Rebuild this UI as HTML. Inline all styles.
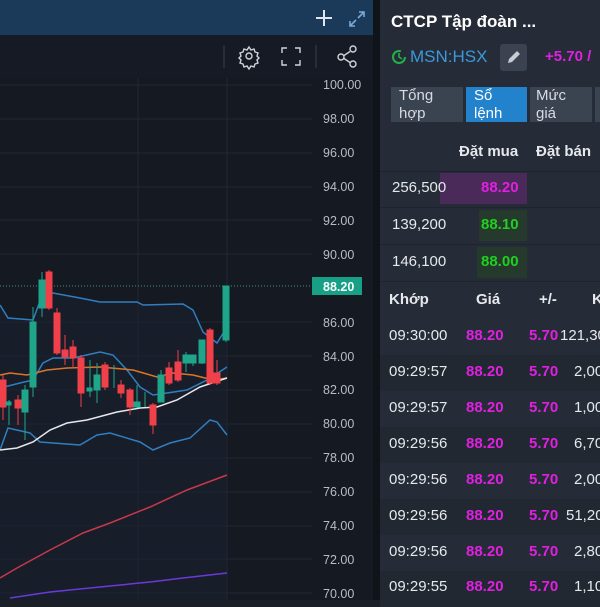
<!DOCTYPE html>
<html><head><meta charset="utf-8"><style>
*{margin:0;padding:0;box-sizing:border-box}
body{width:600px;height:600px;overflow:hidden;background:#1a1f28;font-family:"Liberation Sans","Noto Sans CJK SC",sans-serif;position:relative}
.a{position:absolute}
.r{position:absolute;left:380px;width:220px;background:#252c37}
.t{position:absolute;font-size:15px;color:#e6e8ec;white-space:nowrap}
.m{color:#e020e0;font-weight:bold}
</style></head><body>
<div class="a" style="left:0;top:0;width:373px;height:35px;background:#1b3a5a"></div>
<div class="a" style="left:0;top:35px;width:373px;height:43px;background:#151a24"></div>
<div class="a" style="left:0;top:78px;width:373px;height:522px;background:#151922"></div>
<div class="a" style="left:373px;top:0;width:7px;height:600px;background:#0f131a"></div>
<svg class="a" style="left:0;top:0" width="373" height="600">
<g stroke="#dfe6ee" stroke-width="2" fill="none"><path d="M316 18h16M324 10v16"/></g>
<g stroke="#7aa9d6" stroke-width="1.6" fill="none"><path d="M350 26l6-6M350 21v5h5M358 18l6-6M359 12h5v5"/></g>
<line x1="224" y1="45" x2="224" y2="68" stroke="#3a404c"/><line x1="316" y1="45" x2="316" y2="68" stroke="#3a404c"/>
<g stroke="#d0d4da" stroke-width="1.4" fill="none">
<circle cx="249" cy="56" r="3"/><path d="M249 47l2 3 3-1 1 3 3 1-1 3 2 2-2 2 1 3-3 1-1 3-3-1-2 3-2-3-3 1-1-3-3-1 1-3-2-2 2-2-1-3 3-1 1-3 3 1z"/>
<path d="M282 53v-5h5M295 48h5v5M300 60v5h-5M287 65h-5v-5"/>
<circle cx="353" cy="49" r="3"/><circle cx="341" cy="57" r="3"/><circle cx="353" cy="64" r="3"/><path d="M344 55.5l6-4M344 58.5l6 4"/>
</g>
<g stroke="#232834" stroke-width="1">
<path d="M0 85h312M0 119h312M0 153h312M0 187h312M0 220h312M0 254h312M0 322h312M0 356h312M0 390h312M0 424h312M0 458h312M0 492h312M0 526h312M0 559h312M0 593h312"/>
<path d="M138 78v522M227 78v522"/></g>
<line x1="0" y1="286" x2="312" y2="286" stroke="#4a8a80" stroke-dasharray="1 2"/>
<path d="M0 305L8 318 33 320 43 293 53 293 80 298 100 302 137 302 143 305 183 304 193 310 203 332 217 343 227 327L227 600 0 600Z" fill="#1a2030" opacity=".6"/>
<g fill="none" stroke-width="1.5">
<polyline stroke="#2f7fc0" points="0,305 8,318 33,320 43,293 53,293 80,298 100,302 137,302 143,305 183,304 193,310 203,332 217,343 227,327"/>
<polyline stroke="#2f7fc0" points="0,388 20,383 33,380 43,363 53,358 73,358 100,352 113,355 127,370 140,387 153,395 167,393 187,390 207,380 227,367"/>
<polyline stroke="#2f7fc0" points="0,450 8,428 30,433 40,442 53,443 80,445 97,435 110,433 140,442 153,450 170,443 190,438 210,420 217,422 227,435"/>
<polyline stroke="#d9762a" points="0,375 10,373 27,375 47,370 67,368 100,367 133,370 157,377 173,373 193,375 213,380 227,378"/>
<polyline stroke="#e8e8ea" points="0,450 17,448 33,442 50,430 67,423 87,420 117,412 140,408 157,407 177,400 200,387 227,378"/>
<polyline stroke="#c8384a" points="0,578 17,568 50,550 83,533 110,523 150,507 187,490 227,475"/>
<polyline stroke="#6a3ad8" points="10,598 50,592 100,587 150,582 183,578 227,573"/>
</g>
<g stroke-width="1">
<g stroke="#f0404a" fill="#f0404a">
<line x1="3" y1="375" x2="3" y2="420" /><rect x="0" y="380" width="6" height="27"/>
<line x1="18" y1="395" x2="18" y2="425"/><rect x="15" y="400" width="6" height="8"/>
<line x1="49" y1="270" x2="49" y2="310"/><rect x="46" y="272" width="6" height="36"/>
<line x1="57" y1="308" x2="57" y2="355"/><rect x="54" y="313" width="6" height="40"/>
<line x1="65" y1="335" x2="65" y2="365"/><rect x="62" y="350" width="6" height="7"/>
<line x1="73" y1="340" x2="73" y2="368"/><rect x="70" y="347" width="6" height="11"/>
<line x1="81" y1="355" x2="81" y2="407"/><rect x="78" y="358" width="6" height="35"/>
<line x1="105" y1="362" x2="105" y2="390"/><rect x="102" y="365" width="6" height="22"/>
<line x1="121" y1="380" x2="121" y2="398"/><rect x="118" y="385" width="6" height="8"/>
<line x1="130" y1="388" x2="130" y2="415"/><rect x="127" y="390" width="6" height="17"/>
<line x1="153" y1="403" x2="153" y2="434"/><rect x="150" y="405" width="6" height="20"/>
<line x1="169" y1="362" x2="169" y2="385"/><rect x="166" y="368" width="6" height="15"/>
<line x1="178" y1="350" x2="178" y2="382"/><rect x="175" y="362" width="6" height="18"/>
<line x1="210" y1="328" x2="210" y2="385"/><rect x="207" y="330" width="6" height="53"/>
<line x1="217" y1="360" x2="217" y2="385"/><rect x="214" y="373" width="6" height="10"/>
</g>
<g stroke="#1fa58a" fill="#1fa58a">
<line x1="9" y1="400" x2="9" y2="425"/><rect x="6" y="402" width="5" height="3"/>
<line x1="25" y1="385" x2="25" y2="440"/><rect x="22" y="390" width="6" height="22"/>
<line x1="33" y1="307" x2="33" y2="397"/><rect x="30" y="322" width="6" height="65"/>
<line x1="42" y1="272" x2="42" y2="317"/><rect x="39" y="280" width="6" height="28"/>
<line x1="90" y1="360" x2="90" y2="397"/><rect x="87" y="388" width="5" height="3"/>
<line x1="97" y1="363" x2="97" y2="403"/><rect x="94" y="375" width="6" height="15"/>
<line x1="114" y1="365" x2="114" y2="388"/>
<line x1="137" y1="385" x2="137" y2="408"/><rect x="134" y="402" width="6" height="5"/>
<line x1="145" y1="392" x2="145" y2="407"/>
<line x1="161" y1="370" x2="161" y2="402"/><rect x="158" y="375" width="6" height="27"/>
<line x1="186" y1="352" x2="186" y2="372"/><rect x="183" y="355" width="6" height="8"/>
<line x1="193" y1="355" x2="193" y2="366"/><rect x="190" y="355" width="6" height="8"/>
<line x1="202" y1="340" x2="202" y2="364"/><rect x="199" y="340" width="6" height="23"/>
<line x1="226" y1="286" x2="226" y2="342"/><rect x="223" y="286" width="6" height="54"/>
</g></g>
<g font-family="Liberation Sans,sans-serif" font-size="12.5" fill="#b8bcc4">
<text x="323" y="89">100.00</text><text x="323" y="123">98.00</text><text x="323" y="157">96.00</text><text x="323" y="191">94.00</text><text x="323" y="225">92.00</text><text x="323" y="259">90.00</text><text x="323" y="327">86.00</text><text x="323" y="361">84.00</text><text x="323" y="394">82.00</text><text x="323" y="428">80.00</text><text x="323" y="462">78.00</text><text x="323" y="496">76.00</text><text x="323" y="530">74.00</text><text x="323" y="564">72.00</text><text x="323" y="598">70.00</text>
</g>
<rect x="312" y="277" width="50" height="18" fill="#17a085"/>
<text x="323" y="291" font-family="Liberation Sans,sans-serif" font-size="12.5" font-weight="bold" fill="#fff">88.20</text>
</svg>

<div class="r" style="top:0;height:600px"></div>
<div class="t" style="left:391px;top:12px;font-size:17px;font-weight:bold;color:#fff">CTCP Tập đoàn ...</div>
<svg class="a" style="left:391px;top:49px" width="16" height="16"><circle cx="8" cy="8" r="6" fill="none" stroke="#22b04a" stroke-width="2" stroke-dasharray="30 8"/><path d="M8 4v4l3 2" stroke="#22b04a" stroke-width="1.6" fill="none"/></svg>
<div class="t" style="left:410px;top:47px;font-size:17px;color:#3a98dc">MSN:HSX</div>
<div class="a" style="left:500px;top:44px;width:27px;height:27px;background:#3b4350;border-radius:3px"></div>
<svg class="a" style="left:505px;top:49px" width="17" height="17"><path d="M3 14l1-4 8-8 3 3-8 8z" fill="#c8ccd2"/></svg>
<div class="t m" style="left:545px;top:48px;font-size:15px">+5.70 /</div>
<div class="a" style="left:391px;top:87px;width:72px;height:35px;background:#3a4350"></div>
<div class="a" style="left:466px;top:87px;width:61px;height:35px;background:#2283cc"></div>
<div class="a" style="left:530px;top:87px;width:62px;height:35px;background:#3a4350"></div>
<div class="a" style="left:595px;top:87px;width:10px;height:35px;background:#3a4350"></div>
<div class="t" style="left:399px;top:87px;line-height:18px;color:#d8dce2">Tổng<br>hợp</div>
<div class="t" style="left:474px;top:87px;line-height:18px;color:#fff">Sổ<br>lệnh</div>
<div class="t" style="left:536px;top:87px;line-height:18px;color:#d8dce2">Mức<br>giá</div>
<div class="t" style="left:459px;top:143px;font-weight:bold">Đặt mua</div>
<div class="t" style="left:536px;top:143px;font-weight:bold">Đặt bán</div>
<div class="a" style="left:380px;top:171px;width:220px;height:1px;background:#1e242d"></div>
<div class="a" style="left:380px;top:207px;width:220px;height:1px;background:#1e242d"></div>
<div class="a" style="left:380px;top:244px;width:220px;height:1px;background:#1e242d"></div>
<div class="a" style="left:380px;top:281px;width:220px;height:1px;background:#1e242d"></div>
<div class="a" style="left:440px;top:173px;width:87px;height:31px;background:#4a2a58"></div>
<div class="a" style="left:479px;top:210px;width:48px;height:31px;background:#253a2c"></div>
<div class="a" style="left:477px;top:247px;width:50px;height:31px;background:#253a2c"></div>
<div class="t" style="left:392px;top:179px">256,500</div><div class="t m" style="left:481px;top:179px">88.20</div>
<div class="t" style="left:392px;top:216px">139,200</div><div class="t" style="left:481px;top:216px;color:#1fd020;font-weight:bold">88.10</div>
<div class="t" style="left:392px;top:253px">146,100</div><div class="t" style="left:481px;top:253px;color:#1fd020;font-weight:bold">88.00</div>
<div class="t" style="left:389px;top:291px;font-weight:bold">Khớp</div>
<div class="t" style="left:476px;top:291px;font-weight:bold">Giá</div>
<div class="t" style="left:539px;top:291px;font-weight:bold">+/-</div>
<div class="t" style="left:592px;top:291px;font-weight:bold">K</div>
<div class="a" style="left:380px;top:355px;width:220px;height:36px;background:#212831"></div>
<div class="a" style="left:380px;top:427px;width:220px;height:36px;background:#212831"></div>
<div class="a" style="left:380px;top:499px;width:220px;height:36px;background:#212831"></div>
<div class="a" style="left:380px;top:571px;width:220px;height:36px;background:#212831"></div>
<div class="t" style="left:389px;top:327px">09:30:00</div><div class="t m" style="left:466px;top:327px">88.20</div><div class="t m" style="left:529px;top:327px">5.70</div><div class="t" style="left:560px;top:327px">121,30</div>
<div class="t" style="left:389px;top:363px">09:29:57</div><div class="t m" style="left:466px;top:363px">88.20</div><div class="t m" style="left:529px;top:363px">5.70</div><div class="t" style="left:574px;top:363px">2,00</div>
<div class="t" style="left:389px;top:399px">09:29:57</div><div class="t m" style="left:466px;top:399px">88.20</div><div class="t m" style="left:529px;top:399px">5.70</div><div class="t" style="left:574px;top:399px">1,00</div>
<div class="t" style="left:389px;top:435px">09:29:56</div><div class="t m" style="left:466px;top:435px">88.20</div><div class="t m" style="left:529px;top:435px">5.70</div><div class="t" style="left:574px;top:435px">6,70</div>
<div class="t" style="left:389px;top:471px">09:29:56</div><div class="t m" style="left:466px;top:471px">88.20</div><div class="t m" style="left:529px;top:471px">5.70</div><div class="t" style="left:574px;top:471px">2,00</div>
<div class="t" style="left:389px;top:507px">09:29:56</div><div class="t m" style="left:466px;top:507px">88.20</div><div class="t m" style="left:529px;top:507px">5.70</div><div class="t" style="left:566px;top:507px">51,20</div>
<div class="t" style="left:389px;top:543px">09:29:56</div><div class="t m" style="left:466px;top:543px">88.20</div><div class="t m" style="left:529px;top:543px">5.70</div><div class="t" style="left:574px;top:543px">2,80</div>
<div class="t" style="left:389px;top:578px">09:29:55</div><div class="t m" style="left:466px;top:578px">88.20</div><div class="t m" style="left:529px;top:578px">5.70</div><div class="t" style="left:574px;top:578px">1,10</div>
</body></html>
